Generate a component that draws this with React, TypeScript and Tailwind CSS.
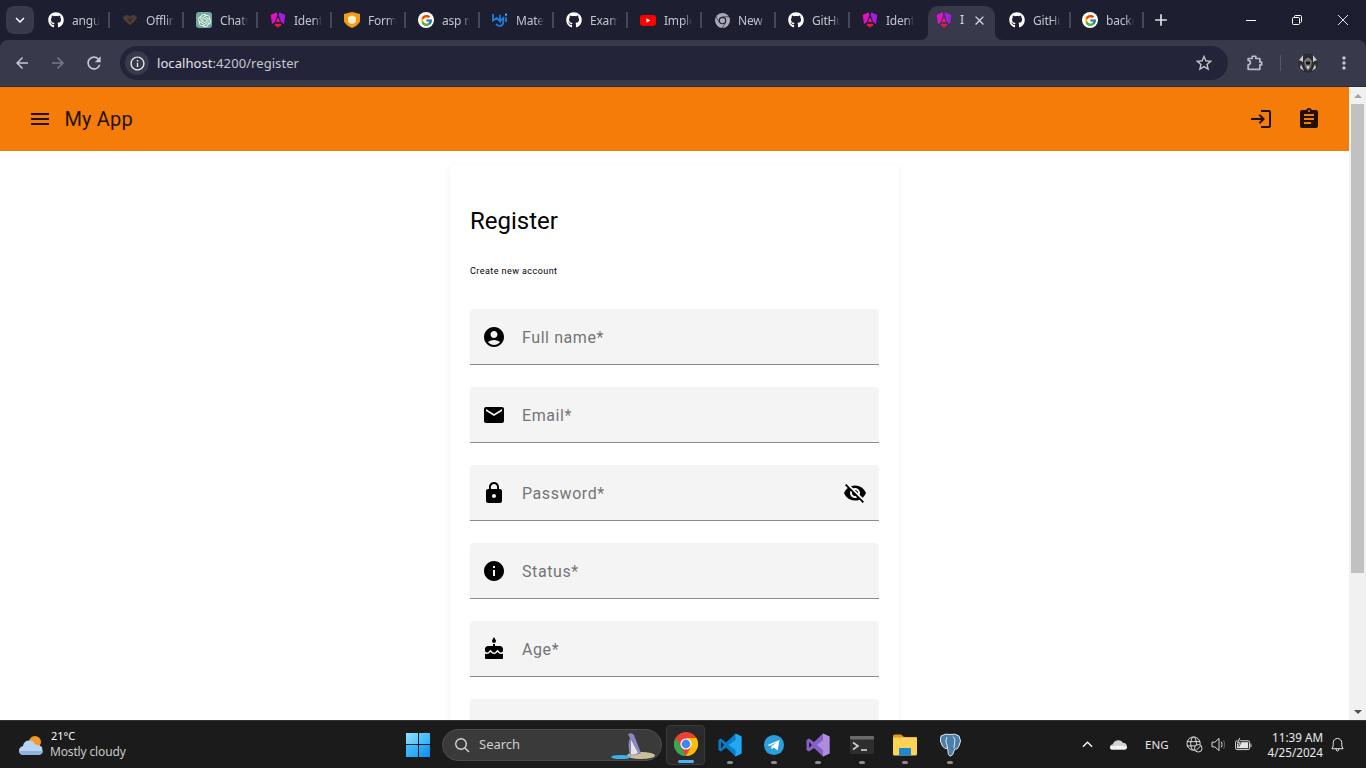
import React from "react";
import { FaGithub } from "react-icons/fa";
import { FcGoogle } from "react-icons/fc";
import { SiOpenai } from "react-icons/si";
import {
  MdAccountCircle, MdEmail, MdLock, MdInfo, MdCake, MdVisibilityOff, MdMenu, MdLogin, MdAssignment,
  MdArrowBack, MdArrowForward, MdRefresh, MdInfoOutline, MdStarBorder, MdMoreVert, MdAdd, MdClose, MdKeyboardArrowDown,
} from "react-icons/md";

const Gh = () => <FaGithub className="text-[16px] text-white shrink-0" />;
const Ng = () => (
  <svg viewBox="0 0 24 24" className="w-4 h-4 shrink-0">
    <path d="M10 0.5 L1 4.5 L3 18 L7.5 15 L10.8 5z" fill="#e012c8" />
    <path d="M14 0.5 L23 4.5 L21 18 L16.5 15 L13.2 5z" fill="#a81ce0" />
    <path d="M12 8 L15 15 H9z" fill="#f01a8c" />
    <path d="M7 17.5 H17 L16.5 20 L12 23.5 L7.5 20z" fill="#f5104f" />
  </svg>
);
const Goo = () => <span className="w-4 h-4 rounded-full bg-white flex items-center justify-center shrink-0"><FcGoogle className="text-[13px]" /></span>;
const Offline = () => (
  <svg viewBox="0 0 24 24" className="w-4 h-4 shrink-0"><path d="M1 8 L7 4 L12 7 L17 4 L23 8 L19 14 L12 20 L5 14z" fill="#4f3f33" /><path d="M7 8 L12 11 L17 8 L12 16z" fill="#352a24" /></svg>
);
const Gpt = () => <span className="w-4 h-4 rounded-[3px] bg-[#74aa9c] flex items-center justify-center shrink-0"><SiOpenai className="text-[13px] text-white" /></span>;
const Shield = () => (
  <svg viewBox="0 0 24 24" className="w-4 h-4 shrink-0"><path d="M12 0 L24 3 V14 Q21 21 12 24 Q3 21 0 14 V3z" fill="#f59a14" /><path d="M6 8 L12 5 L18 8 V15.5 L12 18.5 L6 15.5z" fill="#ffeec4" /></svg>
);
const Mui = () => (
  <svg viewBox="0 0 24 24" className="w-4 h-4 shrink-0" fill="none" stroke="#1c7fe6" strokeWidth="2.6"><path d="M1.5 3 V13 L7 9 L12 14 L12 4 M12 14 L17 9 V15 Q17 20 12 21 Q8 21 6 18" /><circle cx="21" cy="4" r="1.6" fill="#6db4f5" stroke="none" /><path d="M21 8 V15" stroke="#1c7fe6" /></svg>
);
const Yt = () => (
  <svg viewBox="0 0 16 11" className="w-4 h-[11px] shrink-0"><rect width="16" height="11" rx="3" fill="#ff0000" /><path d="M6.4 3.2 L10.4 5.5 L6.4 7.8z" fill="#fff" /></svg>
);
const ChromeGray = () => (
  <span className="w-4 h-4 flex items-center justify-center shrink-0">
    <svg viewBox="0 0 24 24" className="w-[15px] h-[15px]"><circle cx="12" cy="12" r="12" fill="#a9a9b8" /><circle cx="12" cy="12" r="6" fill="#1e1e31" /><circle cx="12" cy="12" r="4.2" fill="#a9a9b8" /><path d="M12 6 H23 M6.8 15 L1.5 6 M17.2 15 L11.5 24" stroke="#1e1e31" strokeWidth="1" /></svg>
  </span>
);

const Sep = () => <span className="absolute right-0 top-3 h-4 w-[2px] bg-[#45465a]" />;

const tabs: { Icon: React.FC; label: string }[] = [
  { Icon: Gh, label: "angular" },
  { Icon: Offline, label: "Offline" },
  { Icon: Gpt, label: "ChatGPT" },
  { Icon: Ng, label: "Identity" },
  { Icon: Shield, label: "Forms" },
  { Icon: Goo, label: "asp net" },
  { Icon: Mui, label: "Material" },
  { Icon: Gh, label: "Example" },
  { Icon: Yt, label: "Implement" },
  { Icon: ChromeGray, label: "New Tab" },
  { Icon: Gh, label: "GitHub" },
  { Icon: Ng, label: "Identity" },
];

function Tab({ Icon, label, sep = true, cls = "" }: { Icon: React.FC; label: string; sep?: boolean; cls?: string }) {
  return (
    <div className={`relative h-10 w-[74px] flex items-center pl-3 gap-2 shrink-0 ${cls}`}>
      <Icon />
      <span className="w-[28px] pt-[1px] overflow-hidden whitespace-nowrap text-[12px] tracking-[-0.2px] text-[#c3c3cf] [mask-image:linear-gradient(to_right,black_70%,transparent)]">{label}</span>
      {sep && <Sep />}
    </div>
  );
}

function TabStrip() {
  return (
    <div className="h-10 bg-[#1e1e31] flex items-stretch shrink-0 font-['Noto_Sans',sans-serif]">
      <div className="w-9 pl-[6px] pt-[6px] shrink-0">
        <div className="w-7 h-7 rounded-lg bg-[#38394b] flex items-center justify-center">
          <MdKeyboardArrowDown className="text-white text-[18px]" />
        </div>
      </div>
      {tabs.map((t, i) => <Tab key={i} Icon={t.Icon} label={t.label} sep={i !== 11} />)}
      <div className="relative ml-1 mr-[2px] mt-[6px] w-[67px] h-[34px] bg-[#38394b] rounded-t-[10px] flex items-center pl-2 pb-[6px] shrink-0">
        <Ng />
        <span className="ml-[8px] text-[12px] text-[#d8d8e0]">I</span>
        <MdClose className="ml-[8px] text-[15px] text-[#d8d8e0]" />
        <svg viewBox="0 0 8 8" className="absolute -left-2 bottom-0 w-2 h-2"><path d="M8 0 V8 H0 Q8 8 8 0z" fill="#38394b" /></svg>
        <svg viewBox="0 0 8 8" className="absolute -right-2 bottom-0 w-2 h-2"><path d="M0 0 V8 H8 Q0 8 0 0z" fill="#38394b" /></svg>
      </div>
      <Tab Icon={Gh} label="GitHub" />
      <Tab Icon={Goo} label="backend" cls="-ml-[1px]" />
      <div className="w-[34px] flex items-center justify-center shrink-0"><MdAdd className="text-[20px] text-[#e0e0e8]" /></div>
      <div className="flex-1" />
      <div className="w-[46px] flex items-center justify-center"><span className="w-[10px] h-[1px] bg-white" /></div>
      <div className="w-[46px] flex items-center justify-center">
        <svg viewBox="0 0 10 10" className="w-[10px] h-[10px]" fill="none" stroke="#fff"><rect x="0.5" y="2.5" width="7" height="7" rx="1" /><path d="M2.5 2.5 V1.5 Q2.5 0.5 3.5 0.5 H8.5 Q9.5 0.5 9.5 1.5 V6.5 Q9.5 7.5 8.5 7.5" /></svg>
      </div>
      <div className="w-[46px] flex items-center justify-center">
        <svg viewBox="0 0 10 10" className="w-[10px] h-[10px]" stroke="#fff" strokeWidth="0.9"><path d="M0 0 L10 10 M10 0 L0 10" /></svg>
      </div>
    </div>
  );
}

function Toolbar() {
  return (
    <div className="h-[47px] bg-[#1e1e31] shrink-0 font-['Noto_Sans',sans-serif]">
      <div className="h-[47px] bg-[#38394b] rounded-t-[8px] border-b border-[#2b2b3a] flex items-center">
        <div className="w-9 flex justify-center ml-1"><MdArrowBack className="text-[18px] text-[#c7c7d1]" /></div>
        <div className="w-9 flex justify-center"><MdArrowForward className="text-[18px] text-[#77788a]" /></div>
        <div className="w-9 flex justify-center"><MdRefresh className="text-[20px] text-[#c7c7d1]" /></div>
        <div className="ml-2 w-[1108px] h-[34px] rounded-full bg-[#23243a] flex items-center pl-[5px] pr-[14px]">
          <div className="w-6 h-6 rounded-full bg-[#38394b] flex items-center justify-center"><MdInfoOutline className="text-[17px] text-[#e3e3ea]" /></div>
          <span className="ml-2 pt-[2px] text-[13px] text-[#e3e3ea] tracking-[0.07px]">localhost<span className="text-[#c7c7d1]">:4200/register</span></span>
          <MdStarBorder className="ml-auto text-[20px] text-[#c7c7d1]" />
        </div>
        <div className="ml-[16px] w-5 flex justify-center">
          <svg viewBox="0 0 20 20" className="w-[18px] h-[18px]" fill="none" stroke="#b9b9c9" strokeWidth="1.9"><path d="M8 2.5 h4 v2.5 h4.5 v4 h2 v3 h-2 v5 h-13 v-5 a2.5 2.5 0 0 0 0 -5 v-2 h4.5z" strokeLinejoin="round" /></svg>
        </div>
        <span className="ml-[16px] w-[1px] h-4 bg-[#55566a]" />
        <span className="ml-[17px] w-[20px] h-[20px] rounded-full overflow-hidden">
          <svg viewBox="0 0 20 20" className="w-5 h-5"><circle cx="10" cy="10" r="10" fill="#2c2c30" /><path d="M1 7 L5 2 L5 9z M19 7 L15 2 L15 9z M2 15 L6 18 L3 11z M18 15 L14 18 L17 11z" fill="#c8c8cc" /><path d="M6 8 Q10 1 14 8 L13 14 L10 18 L7 14z" fill="#77777c" /><path d="M8 8.5 h4 v3 h-4z" fill="#111113" /><path d="M9 13 h2 v2.5 h-2z" fill="#d5d5d8" /></svg>
        </span>
        <MdMoreVert className="ml-[16px] text-[20px] text-[#c7c7d1]" />
      </div>
    </div>
  );
}

function Field({ Icon, label, eye }: { Icon?: React.ComponentType<{ className?: string }>; label?: string; eye?: boolean }) {
  return (
    <div className="h-14 mb-[22px] bg-[#f4f4f4] rounded-t-[4px] border-b border-[#8c8c8c] flex items-center pl-3 pr-3">
      {Icon && <Icon className="text-2xl text-black shrink-0" />}
      {label && <span className="ml-4 pt-[2px] text-[#757575] text-base tracking-[0.58px]">{label}</span>}
      {eye && <MdVisibilityOff className="ml-auto text-2xl text-black" />}
    </div>
  );
}

function Page() {
  return (
    <div className="h-[633px] flex bg-white overflow-hidden shrink-0 font-['Roboto',sans-serif]">
      <div className="flex-1 min-w-0 flex flex-col">
        <header className="h-16 bg-[#f57c08] flex items-center pl-[28px] pr-[28px] text-[#1f1300] shrink-0">
          <MdMenu className="text-2xl" />
          <span className="ml-[12.5px] text-xl font-normal tracking-[0.15px]">My App</span>
          <MdLogin className="ml-auto text-2xl" />
          <MdAssignment className="ml-6 text-2xl" />
        </header>
        <div className="w-[449px] mx-auto mt-[14px] px-5 pt-10 bg-white shadow-[0_2px_6px_rgba(0,0,0,0.07)] h-[600px] text-black">
          <h1 className="text-2xl leading-8 font-normal">Register</h1>
          <p className="mt-[27px] text-[9px] leading-[14px] tracking-[0.44px] mb-[31px]">Create new account</p>
          <Field Icon={MdAccountCircle} label="Full name*" />
          <Field Icon={MdEmail} label="Email*" />
          <Field Icon={MdLock} label="Password*" eye />
          <Field Icon={MdInfo} label="Status*" />
          <Field Icon={MdCake} label="Age*" />
          <Field />
        </div>
      </div>
      <div className="w-[17px] bg-[#f1f1f1] flex flex-col items-center shrink-0">
        <div className="h-[17px] flex items-center justify-center"><span className="w-0 h-0 border-x-[4px] border-x-transparent border-b-[4px] border-b-[#a3a3a3]" /></div>
        <div className="w-[13px] h-[469px] bg-[#c1c1c1]" />
        <div className="flex-1" />
        <div className="h-[17px] flex items-center justify-center"><span className="w-0 h-0 border-x-[4px] border-x-transparent border-t-[4px] border-t-[#505050]" /></div>
      </div>
    </div>
  );
}

const Dot = ({ active }: { active?: boolean }) => (
  <span className={`absolute bottom-[1px] left-1/2 -translate-x-1/2 h-[3px] rounded-full ${active ? "w-4 bg-[#47b5f5]" : "w-[6px] bg-[#8a8a8a]"}`} />
);

const AppSlot = ({ children, w = "w-[44px]", active }: { children: React.ReactNode; w?: string; active?: boolean }) => (
  <div className={`relative h-[40px] flex items-center justify-center shrink-0 rounded-[4px] ${w} ${active ? "bg-[#2a2a2a] border border-[#3a3a3a]" : ""}`}>
    {children}
    <Dot active={active} />
  </div>
);

function Taskbar() {
  return (
    <div className="h-12 bg-[#1b1b1b] border-t border-[#333] flex items-center shrink-0 font-['Noto_Sans',sans-serif] text-white">
      <div className="ml-[19px] w-6 shrink-0">
        <svg viewBox="0 0 24 22" className="w-6 h-[22px]">
          <circle cx="16" cy="8" r="6" fill="#f59a23" />
          <path d="M5 21 Q0 21 0 16.5 Q0 13 4 12 Q5 6 11 6.5 Q15 7 16 10.5 Q20 10 23 13 Q25 21 18 21z" fill="#b9d3f2" />
          <path d="M1 17 H24 Q24 21 18 21 H5 Q1 21 1 17z" fill="#8fb3e0" />
        </svg>
      </div>
      <div className="ml-[7px] w-[100px] shrink-0 leading-none">
        <div className="text-[11px] leading-4 pl-[1px] -mt-[2px]">21°C</div>
        <div className="text-[12px] leading-4 tracking-[-0.15px] text-[#c9c9c9] whitespace-nowrap">Mostly cloudy</div>
      </div>
      <div className="ml-[256px] w-6 h-6 grid grid-cols-2 grid-rows-2 gap-[1px] shrink-0">
        <span className="bg-linear-to-br from-[#8fe0fe] to-[#4cc4fd]" /><span className="bg-linear-to-br from-[#5fcdfd] to-[#2aaefa]" />
        <span className="bg-linear-to-br from-[#45c0fd] to-[#1fa3f8]" /><span className="bg-linear-to-br from-[#2db1fb] to-[#0f8cf0]" />
      </div>
      <div className="relative ml-3 w-[220px] h-8 rounded-full bg-[#3a3a3a] border border-[#4c4c4c] flex items-center pl-[11px] shrink-0">
        <svg viewBox="0 0 16 16" className="w-4 h-4" fill="none" stroke="#d6d6d6" strokeWidth="1.4"><circle cx="7" cy="7" r="5.3" /><path d="M11 11 L15 15" /></svg>
        <span className="ml-[9px] text-[13px] text-[#cfcfcf]">Search</span>
        <svg viewBox="0 0 44 30" className="absolute right-[6px] top-0 w-[44px] h-[30px]">
          <ellipse cx="30" cy="25.5" rx="14" ry="3.5" fill="#c9bf9a" />
          <ellipse cx="10" cy="27" rx="10" ry="2" fill="#3cb4e6" />
          <path d="M17 4 Q21 2 23 5 L30 23 Q25 26 19 25 Q16 14 19 8z" fill="#8a86c0" />
          <path d="M20 10 L27 23 Q24 25 20 24.5z" fill="#e8e4dc" />
        </svg>
      </div>
      <div className="ml-[4px] flex items-center shrink-0">
        <AppSlot active w="w-[39px]">
          <svg viewBox="0 0 24 24" className="w-6 h-6 -mt-[1px]">
            <circle cx="12" cy="12" r="12" fill="#ea4335" />
            <path d="M12 24 A12 12 0 0 1 1.6 6 L7 15 Z" fill="#34a853" />
            <path d="M12 6 H22.4 A12 12 0 0 1 12 24 L17 15 Z" fill="#fbbc05" />
            <circle cx="12" cy="12" r="5.6" fill="#fff" />
            <circle cx="12" cy="12" r="4.4" fill="#4285f4" />
          </svg>
        </AppSlot>
        <AppSlot w="w-[49px]">
          <svg viewBox="0 0 24 24" className="w-6 h-6">
            <path d="M17.5 0.5 L23.5 3.5 V20.5 L17.5 23.5 L8 14.5 L3 18.5 L0.5 17 V7 L3 5.5 L8 9.5z" fill="#0a7cc7" />
            <path d="M17.5 0.5 L23.5 3.5 V20.5 L17.5 23.5z M17.5 7 L10.5 12 L17.5 17z" fill="#22a7f0" fillRule="evenodd" />
            <path d="M3 8.5 L6 12 L3 15.5z" fill="#1b1b1b" />
          </svg>
        </AppSlot>
        <AppSlot w="w-[39px]">
          <svg viewBox="0 0 24 24" className="w-[22px] h-[22px]">
            <circle cx="12" cy="12" r="11" fill="#2a9fdc" />
            <path d="M5 12 L18 6.5 L16 18 L11.5 14.8 L9.5 16.8 L9 13.5 L15.5 8.5 L7.5 13z" fill="#fff" />
          </svg>
        </AppSlot>
        <AppSlot w="w-[49px]">
          <svg viewBox="0 0 24 24" className="w-6 h-6">
            <path d="M17 0.5 L23.5 3.5 V20.5 L17 23.5 L8 15 L3 18.5 L0.5 17 V7 L3 5.5 L8 9z" fill="#8661c5" />
            <path d="M17 0.5 L23.5 3.5 V20.5 L17 23.5z M17 7 L11 12 L17 17z" fill="#b08be0" fillRule="evenodd" />
            <path d="M3.2 9 L6 12 L3.2 15z" fill="#1b1b1b" />
          </svg>
        </AppSlot>
        <AppSlot w="w-[40px]">
          <svg viewBox="0 0 24 18" className="w-6 h-[18px]">
            <rect width="24" height="18" rx="1.5" fill="#2e2e2e" />
            <rect width="24" height="3.5" rx="1" fill="#6a6a6a" />
            <path d="M3 6.5 L8 10 L3 13.5" stroke="#d0d0d0" strokeWidth="1.6" fill="none" />
            <path d="M11 14 H17" stroke="#e0e0e0" strokeWidth="1.5" />
          </svg>
        </AppSlot>
        <AppSlot w="w-[46px]">
          <svg viewBox="0 0 24 22" className="w-6 h-[22px]">
            <path d="M0 2 Q0 0.5 1.5 0.5 H8 L11 3 H24 V8 H0z" fill="#dc9b1f" />
            <rect y="3.5" width="24" height="18" rx="1.5" fill="#fcd354" />
            <rect x="6" y="14" width="12" height="7.5" rx="1" fill="#1f86d0" />
          </svg>
        </AppSlot>
        <AppSlot w="w-[44px]">
          <svg viewBox="0 0 24 24" className="w-[24px] h-[24px]">
            <path d="M3 3 Q8 0 12 1.5 Q17 0 21 3 Q24 8 21 13 L19 16 Q16 15 16 18 Q15 23 12.5 23 Q10 23 10 18 L9.5 15 Q7 17 4.5 13 Q1 8 3 3z" fill="#4c7eaa" stroke="#dfe7ef" strokeWidth="1" />
            <path d="M9 4 Q6.5 8 9 12 L9.5 15 M15 3.5 Q18 6 16.5 10 L16 15" fill="none" stroke="#dfe7ef" strokeWidth="1" />
          </svg>
        </AppSlot>
      </div>
      <div className="ml-[105px] w-5 flex justify-center shrink-0">
        <svg viewBox="0 0 12 7" className="w-[11px] h-[7px]" fill="none" stroke="#fff" strokeWidth="1.4"><path d="M1 6 L6 1 L11 6" /></svg>
      </div>
      <div className="ml-[13px] w-5 shrink-0">
        <svg viewBox="0 0 20 12" className="w-[17px] h-[11px]"><path d="M3 12 Q0 12 0 9 Q0 6 3 6 Q5 1 10 1 Q14 1 15 4 Q19 4 20 8 Q20 12 16 12z" fill="#d2d2d2" /><path d="M0 9 Q8 6 20 9 Q20 12 16 12 H3 Q0 12 0 9z" fill="#f4f4f4" /></svg>
      </div>
      <span className="ml-[6px] w-[36px] text-[11.5px] text-[#e8e8e8] shrink-0 pl-[9px]">ENG</span>
      <div className="ml-[14px] w-[18px] shrink-0">
        <svg viewBox="0 0 18 18" className="w-[17px] h-[17px]" fill="none" stroke="#e4e4e4" strokeWidth="1"><circle cx="8" cy="8" r="7" /><ellipse cx="8" cy="8" rx="3" ry="7" /><path d="M1 6 H15 M1 10.5 H10" /><circle cx="13" cy="13" r="4" fill="#1b1b1b" /><path d="M10.5 15.5 L15.5 10.5" /></svg>
      </div>
      <div className="ml-[7px] w-[22px] shrink-0">
        <svg viewBox="0 0 18 16" className="w-[17px] h-[15px]" fill="none" stroke="#e4e4e4" strokeWidth="1"><path d="M1 5.5 H4 L8.5 1.5 V14.5 L4 10.5 H1z" /><path d="M11 5 Q12.5 8 11 11" /><path d="M13.5 3.5 Q15.5 8 13.5 12.5" stroke="#707070" /></svg>
      </div>
      <div className="ml-[2px] w-[18px] shrink-0">
        <svg viewBox="0 0 18 14" className="w-[17px] h-[13px]" fill="none" stroke="#e4e4e4" strokeWidth="1"><rect x="0.5" y="3" width="15" height="9.5" rx="1.5" /><rect x="2" y="4.5" width="12" height="6.5" fill="#e4e4e4" stroke="none" /><path d="M17 6 V10" /><path d="M5 0 L2.5 5 H5.5 L3.5 9" stroke="#1b1b1b" strokeWidth="2" /><path d="M5 0 L2.5 5 H5.5 L3.5 9" /></svg>
      </div>
      <div className="ml-[6px] w-[64px] text-right shrink-0 text-[11.7px] leading-[15px] text-[#eaeaea]">
        <div>11:39 AM</div>
        <div>4/25/2024</div>
      </div>
      <div className="ml-[7px] shrink-0">
        <svg viewBox="0 0 16 16" className="w-[15px] h-[15px]" fill="none" stroke="#f0f0f0" strokeWidth="1"><path d="M2 12.5 Q3.5 11 3.5 8 V6 A4.5 4.5 0 0 1 12.5 6 V8 Q12.5 11 14 12.5z" strokeLinejoin="round" /><path d="M6.5 12.5 Q6.5 15 8 15 Q9.5 15 9.5 12.5" /></svg>
      </div>
    </div>
  );
}

export default function App() {
  return (
    <div className="w-[1366px] h-[768px] overflow-hidden flex flex-col">
      <TabStrip />
      <Toolbar />
      <Page />
      <Taskbar />
    </div>
  );
}
